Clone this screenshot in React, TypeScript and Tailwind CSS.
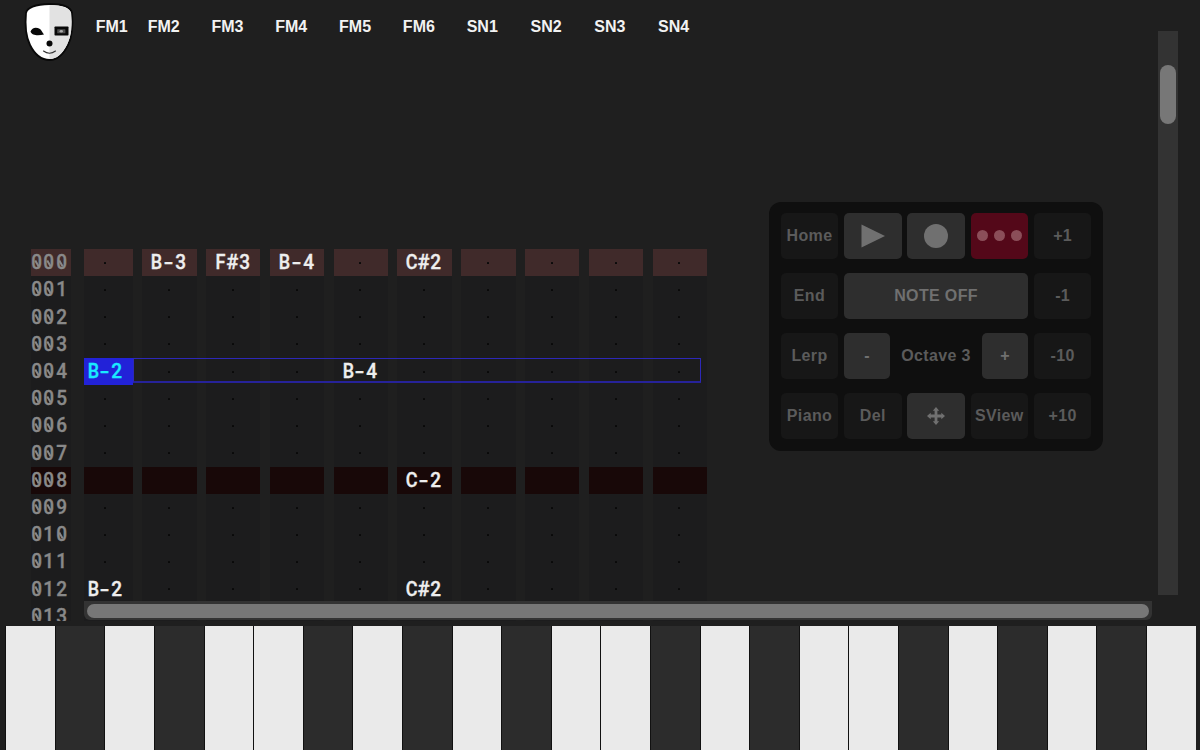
import { clsx } from "clsx";

const CHANNELS = ["FM1", "FM2", "FM3", "FM4", "FM5", "FM6", "SN1", "SN2", "SN3", "SN4"];

// row -> channel -> note
const NOTES: Record<number, Record<number, string>> = {
  0: { 1: "B-3", 2: "F#3", 3: "B-4", 5: "C#2" },
  4: { 0: "B-2", 4: "B-4" },
  8: { 5: "C-2" },
  12: { 0: "B-2", 5: "C#2" },
};

const CURSOR_ROW = 4;
const ROWS = Array.from({ length: 14 }, (_, i) => i);
const OCTAVE = "wbwbwwbwbwbw";
const KEYS = (OCTAVE + OCTAVE).split("");

const columns = "grid grid-cols-[48.7px_repeat(9,54.5px)] gap-x-[9.3px]";

// Fixed-pitch text, one box per character
function Mono({ text, slashed }: { text: string; slashed?: boolean }) {
  return (
    <span className="-ml-[0.2px] whitespace-nowrap [-webkit-text-stroke:0.35px_currentColor]">
      {text.split("").map((ch, i) => (
        <span key={i} className="relative inline-block w-[12.2px] text-center">
          <span
            className={clsx(
              "inline-block",
              ch === "-" && "scale-x-140",
              /[A-Z]/.test(ch) && "scale-x-90",
              /[0-9]/.test(ch) && "scale-x-95",
            )}
          >
            {ch}
          </span>
          {slashed && ch === "0" && (
            <span className="absolute left-[5.2px] top-[10.5px] h-[7px] w-[1.7px] -rotate-[30deg] bg-current" />
          )}
        </span>
      ))}
    </span>
  );
}

function Logo() {
  return (
    <svg viewBox="0 0 60 66" className="h-[66px] w-[60px]">
      <path
        d="M6 13C7 8 15 4 29.5 4S51 8 52 13C53 24 53 35 48 45C43 55 37 60 29.5 60S15 55 10 45C5 35 5 24 6 13Z"
        fill="#fff"
        stroke="#090909"
        strokeWidth="1.8"
      />
      <path d="M29.5 5C43 5 50 9 51 13.5C52 24 52 35 47 44.5C42 54 37 59 29.5 59Z" fill="#e2e2e2" />
      <path d="M10.5 31.5C12 27.5 16 26.5 20 29C21.5 30 22 32 24 34.5C19 35.5 12 36 10.5 31.5Z" fill="#080808" />
      <rect x="34.5" y="26.5" width="14" height="9" rx="0.8" fill="#080808" />
      <rect x="37.2" y="29.2" width="8.2" height="4" rx="0.5" fill="#4d4d4d" />
      <ellipse cx="41.3" cy="31.2" rx="1.7" ry="1.2" fill="#aaa" />
      <circle cx="29.5" cy="43.5" r="3" fill="#080808" />
      <path d="M23.5 51Q29.5 55.5 35.5 51" fill="none" stroke="#333" strokeWidth="1.1" strokeLinecap="round" />
    </svg>
  );
}

function Row({ row }: { row: number }) {
  const fill = row === 0 ? "bg-[#402a2a]" : row === 8 ? "bg-[#180808]" : "bg-[#1c1c1d]";
  const cursor = row === CURSOR_ROW;
  return (
    <div className="relative flex h-[27.2px] shrink-0 text-[20px] font-medium leading-[27.8px]">
      <div className={clsx("mr-[13.7px] w-[39.5px] text-[#898989]", fill)}>
        <Mono text={String(row).padStart(3, "0")} slashed />
      </div>
      <div className={columns}>
        {CHANNELS.map((ch, i) => {
          const note = NOTES[row]?.[i];
          const active = cursor && i === 0;
          return (
            <div
              key={ch}
              className={clsx(
                i === 0 ? "pl-[2.5px]" : "pl-[8.2px]",
                active ? "bg-[#2222d8] text-[#19eaff]" : clsx(fill, "text-[#eee]"),
              )}
            >
              {note ? (
                <Mono text={note} />
              ) : (
                <span className={clsx("flex h-full w-[37.4px] items-center justify-center", row === 8 && "invisible")}>
                  <span className="size-[2px] rounded-[0.5px] bg-[#0a0a0a]" />
                </span>
              )}
            </div>
          );
        })}
      </div>
      {cursor && (
        <div className="absolute left-[102px] top-0 h-[24.6px] w-[568.2px] border border-b-2 border-[#2d28b8] border-b-[#262299]" />
      )}
    </div>
  );
}

function Pad({ children, tone = "dark", className }: { children: React.ReactNode; tone?: "dark" | "light" | "red"; className?: string }) {
  return (
    <button
      className={clsx(
        "flex h-[46px] items-center justify-center rounded-[5px]",
        tone === "dark" && "bg-[#171717] text-[#5b5b5b]",
        tone === "light" && "bg-[#2e2e2e] text-[#707070]",
        tone === "red" && "bg-[#540819] text-[#8b4e59]",
        className,
      )}
    >
      {children}
    </button>
  );
}

function ControlPanel() {
  return (
    <div className="absolute left-[769px] top-[201.5px] grid h-[249px] w-[333.5px] grid-cols-[repeat(5,57.6px)] content-start gap-x-[5.7px] gap-y-[14px] rounded-[12px] bg-[#0f0f0f] pl-[11.7px] pt-[11.1px] text-[16px] font-bold tracking-[0.35px]">
      <Pad>Home</Pad>
      <Pad tone="light">
        <svg viewBox="0 0 24 24" className="size-6 fill-current"><path d="M0.5 0.5L24 12L0.5 23.5Z" /></svg>
      </Pad>
      <Pad tone="light"><span className="size-6 rounded-full bg-current" /></Pad>
      <Pad tone="red" className="gap-[5.5px]">
        <span className="size-[11.5px] rounded-full bg-current" />
        <span className="size-[11.5px] rounded-full bg-current" />
        <span className="size-[11.5px] rounded-full bg-current" />
      </Pad>
      <Pad>+1</Pad>

      <Pad>End</Pad>
      <Pad tone="light" className="col-span-3">NOTE OFF</Pad>
      <Pad>-1</Pad>

      <Pad>Lerp</Pad>
      <div className="col-span-3 flex items-center justify-between text-[#5b5b5b]">
        <Pad tone="light" className="w-[46px]">-</Pad>
        <span>Octave 3</span>
        <Pad tone="light" className="w-[46px]">+</Pad>
      </div>
      <Pad>-10</Pad>

      <Pad>Piano</Pad>
      <Pad>Del</Pad>
      <Pad tone="light">
        <svg viewBox="0 0 18 18" className="size-[18px] fill-current">
          <path d="M9 0L12.2 3.7H10.4V7.6H14.3V5.8L18 9L14.3 12.2V10.4H10.4V14.3H12.2L9 18L5.8 14.3H7.6V10.4H3.7V12.2L0 9L3.7 5.8V7.6H7.6V3.7H5.8Z" />
        </svg>
      </Pad>
      <Pad>SView</Pad>
      <Pad>+10</Pad>
    </div>
  );
}

export default function App() {
  return (
    <div className="relative flex h-[750px] w-[1200px] flex-col overflow-hidden bg-[#1f1f1f] font-['Liberation_Sans',sans-serif]">
      <div className="flex h-[626px] shrink-0">
        <div className="flex w-[1158px] flex-col">
          <header className="flex h-[66px] shrink-0 pl-5">
            <Logo />
            <div className={clsx(columns, "ml-1 pt-[14.5px] text-[16px] font-bold leading-6 text-[#f2f2f2]")}>
              {CHANNELS.map((ch, i) => (
                <span key={ch} className={i === 0 ? "pl-[11.7px]" : "pl-[5.7px]"}>{ch}</span>
              ))}
            </div>
          </header>

          <div className="relative mt-[183.3px] flex h-[371.5px] flex-col overflow-hidden pl-[31px] font-['Roboto',sans-serif]">
            {ROWS.map((row) => (
              <Row key={row} row={row} />
            ))}
            {/* horizontal scrollbar over the last row */}
            <div className="absolute left-[84.3px] top-[351.7px] h-[19.5px] w-[1067.7px] rounded-b-[6px] bg-[#333] px-[2.7px] pt-[2.7px]">
              <div className="h-[14.3px] rounded-full bg-[#777]" />
            </div>
          </div>
        </div>

        {/* vertical scrollbar */}
        <div className="mt-[31px] h-[564px] w-[19.5px] bg-[#333] px-[1.7px] pt-[33.7px]">
          <div className="h-[59.3px] rounded-full bg-[#777]" />
        </div>
      </div>

      <ControlPanel />

      {/* piano */}
      <div className="grid h-[124px] shrink-0 grid-cols-[repeat(24,49.6px)] pl-[5.3px]">
        {KEYS.map((key, i) => (
          <div key={i} className={clsx("border-l border-[#111]", key === "w" ? "bg-[#eaeaea]" : "bg-[#2c2c2c]")} />
        ))}
      </div>
    </div>
  );
}
